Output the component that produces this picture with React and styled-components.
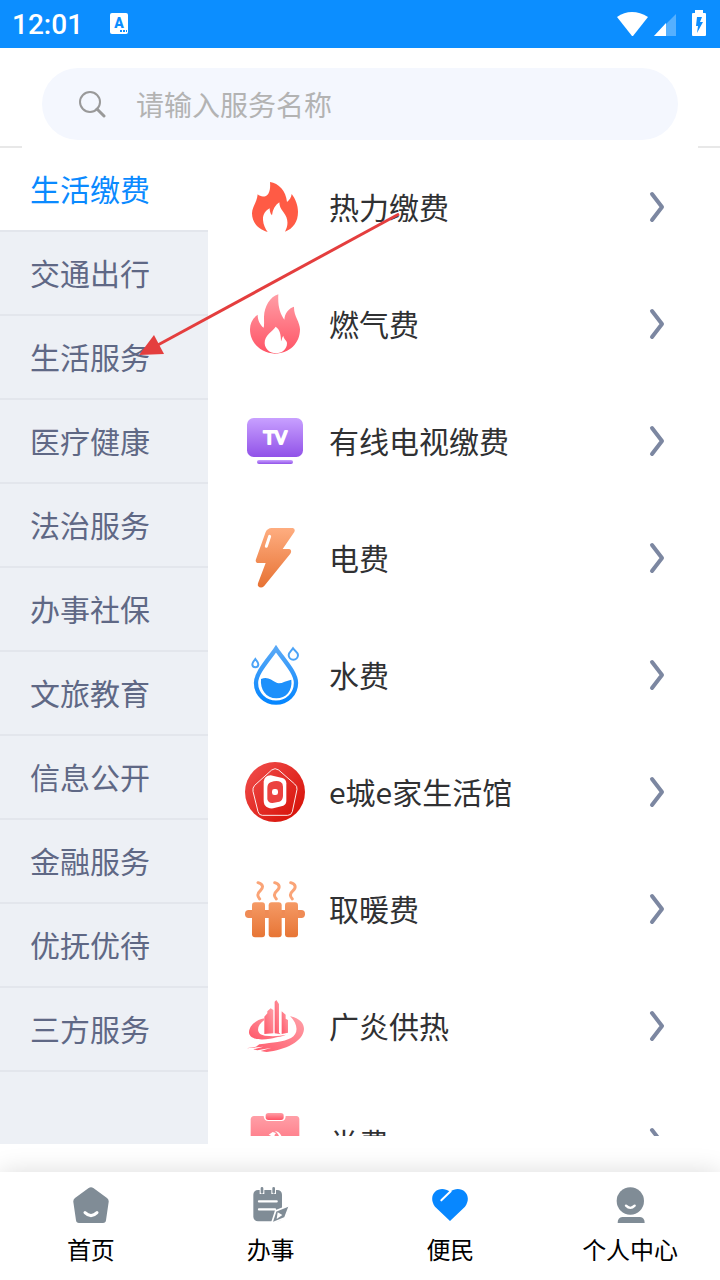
import React from "react";
import styled, { createGlobalStyle } from "styled-components";

const Global = createGlobalStyle`
  *, *::before, *::after { box-sizing: border-box; }
  body {
    margin: 0;
    background: #fff;
    font-family: "Noto Sans CJK SC", "Noto Sans", sans-serif;
  }
  button, input { font: inherit; }
`;

const Screen = styled.div`
  display: flex;
  flex-direction: column;
  height: 100vh;
  background: #fff;
`;

const StatusBar = styled.header`
  display: flex;
  align-items: center;
  flex: none;
  height: 48px;
  padding: 0 14px 0 12px;
  background: #0c8eff;
  color: #fff;
`;

const Clock = styled.time`
  font: 500 28px/48px Roboto, sans-serif;
  padding-top: 2px;
`;

const InputBadge = styled.svg`
  width: 20px;
  height: 22px;
  margin-left: 26px;
`;

const StatusIcons = styled.svg`
  width: 90px;
  height: 48px;
  margin-left: auto;
`;

const SearchArea = styled.div`
  flex: none;
  padding-top: 20px;
`;

const SearchBox = styled.label`
  display: flex;
  align-items: center;
  gap: 30px;
  height: 72px;
  margin: 0 42px 6px;
  padding: 0 36px;
  border-radius: 36px;
  background: #f4f7fe;

  svg { flex: none; width: 28px; height: 28px; }
`;

const SearchInput = styled.input`
  flex: 1;
  min-width: 0;
  padding: 0;
  border: 0;
  outline: 0;
  background: none;
  color: #303133;
  font-size: 28px;
  line-height: 40px;

  &::placeholder { color: #b3b3b3; opacity: 1; }
`;

const EdgeLines = styled.div`
  display: flex;
  justify-content: space-between;

  &::before, &::after {
    content: "";
    width: 22px;
    height: 2px;
    background: #e8e8e8;
  }
`;

const Body = styled.main`
  position: relative;
  display: flex;
  flex: 1;
  min-height: 0;
  margin-bottom: 28px;
`;

const Sidebar = styled.nav`
  flex: none;
  width: 208px;
  overflow: auto;
  scrollbar-width: none;
  background: #edf0f5;
`;

const Category = styled.button`
  display: block;
  width: 100%;
  height: 84px;
  padding: 0 0 2px 30px;
  border: 0;
  border-bottom: 2px solid #e3e6ec;
  background: ${(p) => (p.$active ? "#fff" : "transparent")};
  color: ${(p) => (p.$active ? "#0a8aff" : "#5f6885")};
  font-size: 30px;
  line-height: 80px;
  text-align: left;
`;

const ServiceList = styled.div`
  flex: 1;
  min-width: 0;
  margin-bottom: 8px;
  overflow: auto;
  scrollbar-width: none;
`;

const Service = styled.button`
  display: flex;
  align-items: center;
  gap: 24px;
  width: 100%;
  height: 117px;
  padding: 1px 55px 0 37px;
  border: 0;
  background: none;
  color: #303133;
  font-size: 30px;
  line-height: 44px;
  text-align: left;
`;

const ServiceIcon = styled.svg`
  flex: none;
  width: 60px;
  height: 60px;
`;

const ServiceName = styled.span`
  flex: 1;
  padding-bottom: 2px;
`;

const Chevron = styled.svg`
  flex: none;
  width: 16px;
  height: 32px;
`;

const Pointer = styled.svg`
  position: absolute;
  top: 62px;
  left: 136px;
  width: 268px;
  height: 152px;
  pointer-events: none;
`;

const TabBar = styled.nav`
  display: flex;
  flex: none;
  height: 108px;
  padding-left: 1px;
  background: #fff;
  box-shadow: 0 0 24px rgba(0, 0, 0, 0.14);
`;

const Tab = styled.button`
  display: flex;
  flex: 1;
  flex-direction: column;
  align-items: center;
  gap: 8px;
  padding: 15px 0 0;
  border: 0;
  background: none;
  color: #000;
  font-size: 24px;
  line-height: 36px;

  svg { width: 36px; height: 36px; }
`;

function Gradient({ id, from, to, diagonal }) {
  return (
    <linearGradient id={id} x1={diagonal === "up" ? "1" : "0"} y1="0" x2={diagonal === "down" ? "1" : "0"} y2="1">
      <stop offset="0" stopColor={from} />
      <stop offset="1" stopColor={to} />
    </linearGradient>
  );
}

const HeatIcon = () => (
  <ServiceIcon viewBox="45 51 180 180" aria-hidden="true">
    <path fill="#ff5b45" d="M120 66C146 70 168 92 171 126C179 120 184 112 185 102C197 117 204 137 204 155C204 185 190 205 165 215C176 195 175 175 160 156C152 146 148 138 148 127C136 135 128 148 126 166C120 160 119 152 119 145C105 152 98 165 99 180C100 195 106 206 113 216C85 208 66 188 66 160C66 140 81 128 83 103C92 112 108 112 115 101C121 90 121 78 120 66Z" />
  </ServiceIcon>
);

const GasIcon = () => (
  <ServiceIcon viewBox="45 402 180 180" aria-hidden="true">
    <Gradient id="gas" from="#ff9ea6" to="#ff5365" />
    <path fill="url(#gas)" d="M145 403C120 410 103 440 102 470C102 482 103 495 101 503C90 495 83 480 83 464C68 474 60 490 60 508C60 550 95 581 135 581C178 581 210 550 210 508C210 485 191 468 192 440C176 445 164 460 163 479C150 460 143 440 145 403Z" />
    <path fill="#fff" d="M137 500C128 515 103 525 104 550C105 568 120 580 138 580C156 580 171 568 171 550C171 540 162 540 160 527C155 532 156 540 153 544C153 525 150 508 137 500Z" />
  </ServiceIcon>
);

const TvIcon = () => (
  <ServiceIcon viewBox="45 33 180 180" aria-hidden="true">
    <Gradient id="tv" from="#c8a0ff" to="#9152e8" />
    <rect x="51" y="54" width="168" height="117" rx="20" fill="url(#tv)" />
    <rect x="81" y="180" width="108" height="12" rx="6" fill="url(#tv)" />
    <g textAnchor="middle" fontFamily="DejaVu Sans" fontSize="54" fill="#fff" stroke="#fff" strokeWidth="6" strokeLinejoin="round">
      <text x="136" y="131">TV</text>
    </g>
  </ServiceIcon>
);

const PowerIcon = () => (
  <ServiceIcon viewBox="45 384 180 180" aria-hidden="true">
    <Gradient id="power" from="#fead80" to="#e77233" />
    <path fill="url(#power)" d="M125 384H188Q197 386 193 396L158 447H178Q187 450 181 461L102 559Q92 567 84 558Q83 555 84 550L107 489H82Q75 487 78 478L107 396Q112 385 125 384Z" />
    <path fill="none" stroke="#fff" strokeWidth="9" strokeLinecap="round" d="M119 409L109 439" />
  </ServiceIcon>
);

const WaterIcon = () => (
  <ServiceIcon viewBox="45 45 180 180" aria-hidden="true">
    <Gradient id="water" from="#58a8f6" to="#0586ff" />
    <path fill="none" stroke="url(#water)" strokeWidth="13" d="M138 56C115 90 78 128 78 159C78 192 105 218 138 218C171 218 198 192 198 159C198 128 161 90 138 56Z" />
    <path fill="#1d90fb" d="M93 147C112 138 125 150 137 157C150 166 165 152 184 149C188 182 168 205 139 205C108 205 90 178 93 147Z" />
    <g fill="none" stroke="#4ba3f7" strokeWidth="6">
      <path d="M76 87C72 93 67 96 67 103A9 9 0 0 0 85 103C85 96 80 93 76 87Z" />
      <path d="M189 55C184 63 176 67 176 75A14 14 0 0 0 204 75C204 67 194 63 189 55Z" />
    </g>
  </ServiceIcon>
);

const HomeLifeIcon = () => (
  <ServiceIcon viewBox="45 396 180 180" aria-hidden="true">
    <Gradient id="homelife" from="#f2504f" to="#d40b00" diagonal="down" />
    <circle cx="135" cy="486" r="90" fill="url(#homelife)" />
    <path fill="none" stroke="#fff" strokeOpacity=".9" strokeWidth="3" d="M125 420Q135 412 146 420L194 462Q202 468 201 478L187 545Q184 556 173 556H97Q87 556 84 545L69 484Q67 474 74 466Z" />
    <path fill="#fff" d="M122 436L157 444Q169 448 169 460V512Q169 522 160 527L130 535Q113 537 104 525Q101 520 101 510V455Q103 437 122 436Z" />
    <path fill="#eb4240" d="M122 457Q140 450 152 456Q159 460 159 470V498Q158 512 148 515L128 519Q115 520 112 508V475Q112 460 122 457Z" />
    <rect x="126" y="477" width="18" height="18" rx="7" fill="#fff" />
  </ServiceIcon>
);

const HeatingIcon = () => (
  <ServiceIcon viewBox="45 27 180 180" aria-hidden="true">
    <Gradient id="heating" from="#f59a66" to="#e77535" />
    <g fill="none" stroke="#faa477" strokeWidth="9" strokeLinecap="round">
      <path d="M84 38C100 43 101 52 91 62C81 71 81 78 89 87" />
      <path d="M134 38C150 43 151 52 141 62C131 71 131 78 139 87" />
      <path d="M182 38C198 43 199 52 189 62C179 71 179 78 187 87" />
    </g>
    <rect x="45" y="120" width="180" height="24" rx="11" fill="#ef8b55" />
    <g fill="url(#heating)">
      <rect x="66" y="97" width="39" height="105" rx="9" />
      <rect x="116" y="97" width="39" height="105" rx="9" />
      <rect x="165" y="97" width="39" height="105" rx="9" />
    </g>
  </ServiceIcon>
);

const GuangyanIcon = () => (
  <ServiceIcon viewBox="45 378 180 180" aria-hidden="true">
    <Gradient id="guangyan" from="#ffa0a8" to="#ff5668" diagonal="up" />
    <g fill="url(#guangyan)">
      <path d="M103 492V440L112 430V424L122 415L130 420V490Z" />
      <path d="M134 490V395L139 390L147 402V488L152 493Z" />
      <path d="M155 424L167 434V446L174 450V488L155 492Z" />
      <path d="M103 445C75 450 57 470 57 487C57 507 88 512 120 506C145 501 160 498 168 494C150 498 130 500 105 497C75 492 80 466 103 450Z" />
      <path d="M180 438C210 446 222 460 222 477C220 515 165 540 110 546L92 543L125 533L82 541L70 538L100 530L49 535L78 530L88 523C130 517 160 516 183 504C207 490 204 462 180 438Z" />
    </g>
  </ServiceIcon>
);

const PartyIcon = () => (
  <ServiceIcon viewBox="45 729 180 180" aria-hidden="true">
    <Gradient id="party" from="#ff9fa7" to="#ff5365" />
    <path fill="url(#party)" d="M72 738H101Q102 753 115 753H154Q167 753 167 738H199Q208 739 208 748V890Q208 900 198 900H72Q62 900 62 890V748Q63 739 72 738Z" />
    <rect x="107" y="729" width="54" height="21" rx="8" fill="url(#party)" />
    <path fill="#fff" d="M116 794L128 786L138 789L133 796L165 830L157 838L126 799Z" />
    <path fill="#fff" d="M134 782C150 785 158 798 157 815L148 822C151 802 147 792 134 782Z" />
  </ServiceIcon>
);

const categories = ["生活缴费", "交通出行", "生活服务", "医疗健康", "法治服务", "办事社保", "文旅教育", "信息公开", "金融服务", "优抚优待", "三方服务"];

const services = [
  ["热力缴费", HeatIcon],
  ["燃气费", GasIcon],
  ["有线电视缴费", TvIcon],
  ["电费", PowerIcon],
  ["水费", WaterIcon],
  ["e城e家生活馆", HomeLifeIcon],
  ["取暖费", HeatingIcon],
  ["广炎供热", GuangyanIcon],
  ["党费", PartyIcon],
];

const HomeTab = () => (
  <svg viewBox="0 0 108 108" aria-hidden="true">
    <path fill="#808c96" d="M47 3Q54-2 61 3L102 33Q108 38 107 45L99 100Q98 108 90 108H18Q10 108 9 100L1 45Q0 38 6 33Z" />
    <path fill="none" stroke="#fff" strokeWidth="9" strokeLinecap="round" d="M36 77Q54 95 72 77" />
  </svg>
);

const WorkTab = () => (
  <svg viewBox="0 0 108 108" aria-hidden="true">
    <rect x="1" y="9" width="86" height="94" rx="14" fill="#808c96" />
    <path stroke="#fff" strokeWidth="14" d="M27 0V21M62 0V21" />
    <path stroke="#808c96" strokeWidth="8" strokeLinecap="round" d="M27 4V16M62 4V16" />
    <path stroke="#fff" strokeWidth="7" strokeLinecap="round" d="M18 43H71M18 67H66" />
    <path fill="#808c96" stroke="#fff" strokeWidth="5" d="M110 55L96 92L56 109L68 72Z" />
    <path fill="#fff" d="M74 76L88 84L71 96Z" />
  </svg>
);

const HeartTab = () => (
  <svg viewBox="0 0 108 108" aria-hidden="true">
    <path fill="#0787ff" d="M54 102L9 59C-17 22 22-10 54 14C86-10 125 22 99 59Z" />
    <path stroke="#fff" strokeWidth="6" strokeLinecap="round" d="M28 40L56 13" />
  </svg>
);

const MeTab = () => (
  <svg viewBox="0 0 108 108" aria-hidden="true">
    <circle cx="55" cy="42" r="41" fill="#808c96" />
    <path fill="none" stroke="#fff" strokeWidth="7" strokeLinecap="round" d="M42 56Q55 69 68 56" />
    <path fill="#808c96" d="M31 90H84Q98 91 98 108H17Q17 91 31 90Z" />
  </svg>
);

const tabs = [
  ["首页", HomeTab],
  ["办事", WorkTab],
  ["便民", HeartTab],
  ["个人中心", MeTab],
];

export default function App() {
  return (
    <Screen>
      <Global />
      <StatusBar>
        <Clock>12:01</Clock>
        <InputBadge viewBox="0 0 20 22" aria-hidden="true">
          <rect x="1" y="0" width="18" height="21" rx="2" fill="#fff" />
          <text x="10" y="15" textAnchor="middle" fontFamily="Roboto" fontWeight="900" fontSize="14" fill="#0c8eff">A</text>
          <path fill="#0c8eff" d="M11 17h2v2h-2zM14 17h2v2h-2zM17 17h1v2h-1z" />
        </InputBadge>
        <StatusIcons viewBox="616 0 90 48" aria-hidden="true">
          <path fill="#fff" d="M632 36L617 17Q624 12 632 12T648 17L633 36Z" />
          <path fill="#fff" fillOpacity=".3" d="M654 36L676 14V36Z" />
          <path fill="#fff" d="M654 36L666 23V36Z" />
          <path fill="#fff" d="M695 10H703V13H705Q706 13 706 14V35Q706 36 705 36H693Q692 36 692 35V14Q692 13 693 13H695Z" />
          <path fill="#0c8eff" d="M697 17H702L700 22H703L697 33L698 26H696Z" />
        </StatusIcons>
      </StatusBar>

      <SearchArea>
        <SearchBox>
          <svg viewBox="0 0 28 28" fill="none" stroke="#999" aria-hidden="true">
            <circle cx="12" cy="12" r="10" strokeWidth="2" />
            <path d="M19 19L26 26" strokeWidth="3" strokeLinecap="round" />
          </svg>
          <SearchInput type="text" placeholder="请输入服务名称" aria-label="请输入服务名称" />
        </SearchBox>
        <EdgeLines />
      </SearchArea>

      <Body>
        <Sidebar>
          {categories.map((name, i) => (
            <Category key={name} type="button" $active={i === 0}>{name}</Category>
          ))}
        </Sidebar>
        <ServiceList>
          {services.map(([name, Icon]) => (
            <Service key={name} type="button">
              <Icon />
              <ServiceName>{name}</ServiceName>
              <Chevron viewBox="0 0 16 32" fill="none" stroke="#7c87a1" strokeWidth="4" strokeLinecap="round" strokeLinejoin="round" aria-hidden="true">
                <path d="M3 3L13 16L3 29" />
              </Chevron>
            </Service>
          ))}
        </ServiceList>
        <Pointer viewBox="136 210 268 152" aria-hidden="true">
          <path d="M399 214L156 346" stroke="#e43e3e" strokeWidth="3" />
          <path d="M139 355L154 335L164 354Z" fill="#e43e3e" />
        </Pointer>
      </Body>

      <TabBar>
        {tabs.map(([name, Icon]) => (
          <Tab key={name} type="button">
            <Icon />
            <span>{name}</span>
          </Tab>
        ))}
      </TabBar>
    </Screen>
  );
}
